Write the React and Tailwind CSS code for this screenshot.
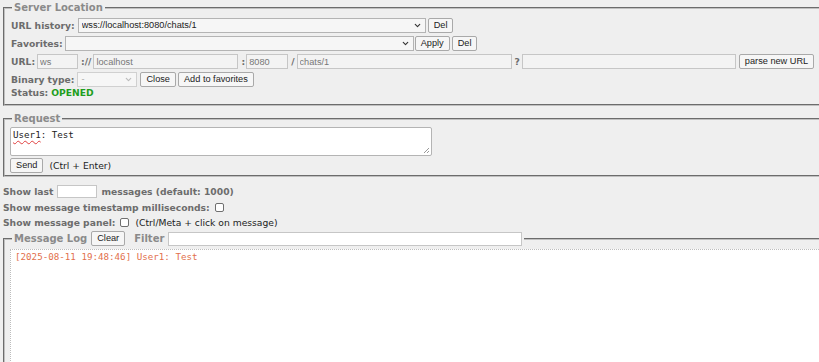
import React from 'react';
import { ChevronDown } from 'lucide-react';

const btn =
  "h-[15px] px-[5px] border border-[#a9a9a9] rounded-[2px] bg-[#f6f6f6] text-[#222] font-['Liberation_Sans',sans-serif] font-normal text-[9.2px] leading-none";

const field =
  "h-[15px] px-[2px] border border-[#c6c6c6] bg-[#f3f3f3] text-[#777] font-['Liberation_Sans',sans-serif] font-normal text-[9.2px] leading-none outline-none";

function Select({ className, value, muted }) {
  return (
    <div className={`relative ${className}`}>
      <select
        defaultValue={value}
        className={`appearance-none w-full h-[15px] pl-[3px] border border-[#b4b4b4] bg-[#f6f6f6] font-['Liberation_Sans',sans-serif] font-normal text-[9.2px] leading-none outline-none ${
          muted ? 'text-[#aaa] border-[#d0d0d0]' : 'text-[#222]'
        }`}
      >
        <option value={value}>{value}</option>
      </select>
      <ChevronDown
        size={9}
        strokeWidth={3}
        className={`absolute right-[4px] top-[3px] pointer-events-none ${muted ? 'text-[#bbb]' : 'text-[#333]'}`}
      />
    </div>
  );
}

function Check({ className }) {
  return (
    <input
      type="checkbox"
      className={`appearance-none w-[9px] h-[9px] border border-[#6f6f6f] rounded-[2px] bg-white ${className}`}
    />
  );
}

export default function App() {
  return (
    <div className="w-[819px] h-[362px] overflow-hidden bg-[#efefef] font-['DejaVu_Sans',sans-serif] text-[9.2px] leading-[11px] text-[#6c6c6c]">
      <fieldset className="ml-[3px] mr-[-30px] mt-[2px] border-2 [border-style:groove] border-[#c0c0c0] pl-[6px] pt-[5px] pb-[6px]">
        <legend className="ml-[1px] px-[2px] font-bold text-[10px] text-[#8a8a8a]">Server Location</legend>

        <div className="flex flex-col gap-[3px] font-bold">
          <div className="flex items-center h-[15px]">
            <span>URL history:</span>
            <Select className="ml-[3px] w-[348px]" value="wss://localhost:8080/chats/1" />
            <button className={`${btn} ml-[2px]`}>Del</button>
          </div>

          <div className="flex items-center h-[15px]">
            <span>Favorites:</span>
            <Select className="ml-[2px] w-[349px]" value="" />
            <button className={`${btn} ml-[1px]`}>Apply</button>
            <button className={`${btn} ml-[2px]`}>Del</button>
          </div>

          <div className="flex items-center h-[15px]">
            <span>URL:</span>
            <input className={`${field} ml-[2px] w-[41px]`} defaultValue="ws" />
            <span className="ml-[3px]">://</span>
            <input className={`${field} ml-[2px] w-[145px]`} defaultValue="localhost" />
            <span className="ml-[3px]">:</span>
            <input className={`${field} ml-[1px] w-[42px]`} defaultValue="8080" />
            <span className="ml-[3px]">/</span>
            <input className={`${field} ml-[2px] w-[215px]`} defaultValue="chats/1" />
            <span className="ml-[3px]">?</span>
            <input className={`${field} ml-[2px] w-[214px]`} defaultValue="" />
            <button className={`${btn} ml-[3px]`}>parse new URL</button>
          </div>

          <div className="flex items-center h-[15px]">
            <span>Binary type:</span>
            <Select className="ml-[3px] w-[60px]" value="-" muted />
            <button className={`${btn} ml-[3px]`}>Close</button>
            <button className={`${btn} ml-[2px]`}>Add to favorites</button>
          </div>

          <div className="flex items-center h-[12px] -mt-[4px]">
            <span>Status:</span>
            <span className="ml-[3px] text-[#1e9e1e]">OPENED</span>
          </div>
        </div>
      </fieldset>

      <fieldset className="ml-[3px] mr-[-30px] mt-[7px] border-2 [border-style:groove] border-[#c0c0c0] pl-[5px] pt-[3px] pb-[2px]">
        <legend className="ml-[2px] px-[2px] font-bold text-[10px] text-[#8a8a8a]">Request</legend>
        <div className="relative w-[422px] h-[29px] border border-[#b4b4b4] rounded-[2px] bg-white px-[2px] pt-[1px] font-['DejaVu_Sans_Mono',monospace] text-[9.2px] leading-[11px] text-[#222]">
          <span className="underline decoration-wavy decoration-[#e04040] decoration-1 underline-offset-2">User1</span>: Test
          <svg width="7" height="7" viewBox="0 0 7 7" className="absolute right-[1px] bottom-[1px]">
            <path d="M6 1L1 6M6 4L4 6" stroke="#999" strokeWidth="1" />
          </svg>
        </div>
        <div className="flex items-center mt-[2px] h-[15px]">
          <button className={btn}>Send</button>
          <span className="ml-[6px] text-[#222]">(Ctrl + Enter)</span>
        </div>
      </fieldset>

      <div className="pl-[3px] font-bold">
        <div className="flex items-center h-[13px] mt-[8px]">
          <span>Show last</span>
          <input className="ml-[4px] w-[40px] h-[13px] border border-[#c6c6c6] bg-white outline-none" />
          <span className="ml-[4px]">messages (default: 1000)</span>
        </div>
        <div className="flex items-center h-[13px] mt-[3px]">
          <span>Show message timestamp milliseconds:</span>
          <Check className="ml-[5px]" />
        </div>
        <div className="flex items-center h-[13px] mt-[2px]">
          <span>Show message panel:</span>
          <Check className="ml-[5px]" />
          <span className="ml-[6px] font-normal text-[#222]">(Ctrl/Meta + click on message)</span>
        </div>
      </div>

      <fieldset className="ml-[3px] mr-[-30px] mt-[2px] border-2 [border-style:groove] border-[#c0c0c0] pl-[5px] pt-[3px] pb-0">
        <legend className="ml-[2px] px-[2px]">
          <div className="flex items-center h-[15px]">
            <span className="font-bold text-[10px] text-[#8a8a8a]">Message Log</span>
            <button className={`${btn} ml-[4px]`}>Clear</button>
            <span className="ml-[9px] font-bold text-[10px] text-[#8a8a8a]">Filter</span>
            <input className="ml-[4px] w-[354px] h-[14px] border border-[#c6c6c6] bg-white outline-none" />
          </div>
        </legend>
        <div className="h-[200px] border border-dotted border-[#bdbdbd] bg-white px-[4px] pt-[1px] font-['DejaVu_Sans_Mono',monospace] text-[9.2px] leading-[12px] text-[#e2704c]">
          [2025-08-11 19:48:46] User1: Test
        </div>
      </fieldset>
    </div>
  );
}
